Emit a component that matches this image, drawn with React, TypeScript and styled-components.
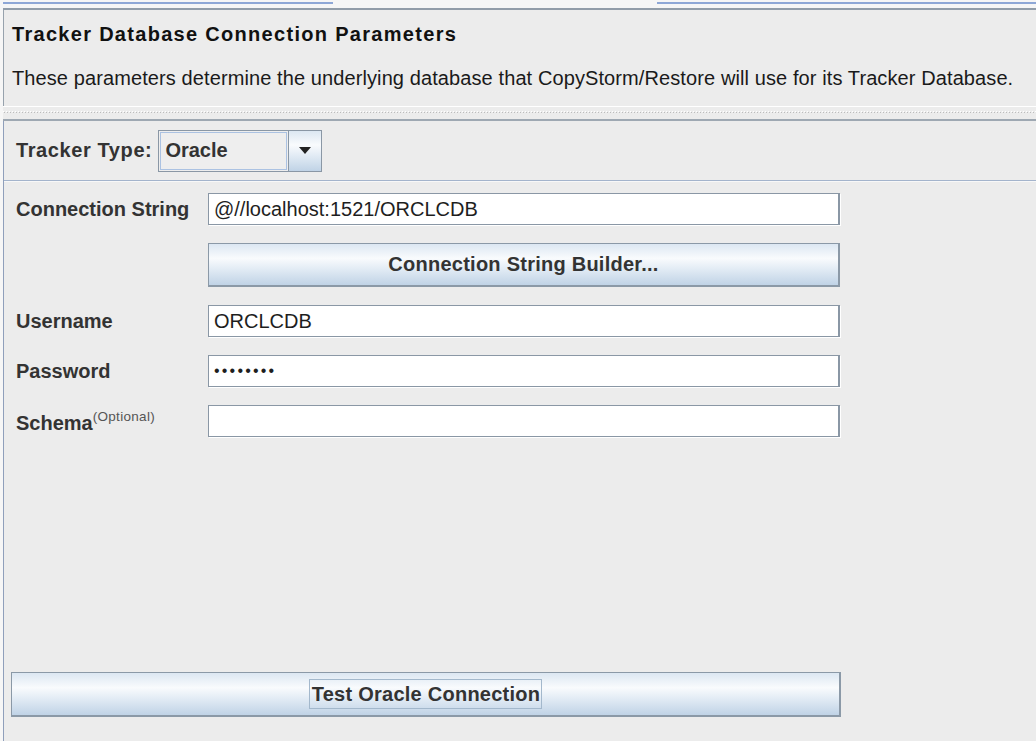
import styled, { createGlobalStyle } from "styled-components";

const GlobalStyle = createGlobalStyle`
  html, body {
    margin: 0;
    padding: 0;
    background: #f6f6f6;
  }
  body {
    font-family: "Liberation Sans", Arial, sans-serif;
    color: #333;
  }
`;

const Window = styled.div`
  width: 1036px;
  height: 741px;
  display: flex;
  flex-direction: column;
  overflow: hidden;
  background: #f6f6f6;
`;

const TabStrip = styled.div`
  height: 8px;
  display: flex;
  align-items: flex-start;
  border-bottom: 2px solid #929da9;
  margin-left: 3px;
`;

const TabEdge = styled.div<{ $width?: number }>`
  margin-top: 2px;
  height: 2px;
  background: #8ea7d6;
  ${({ $width }) => ($width ? `width: ${$width}px;` : "flex: 1;")}
`;

const TabGap = styled.div<{ $width: number }>`
  width: ${({ $width }) => $width}px;
`;

const Body = styled.div`
  flex: 1;
  display: flex;
  flex-direction: column;
  padding-left: 3px;
`;

const TopPanel = styled.section`
  height: 96px;
  box-sizing: border-box;
  background: #ececec;
  border-left: 1px solid #97a2ad;
  padding-left: 8px;
`;

const Title = styled.h1`
  margin: 13px 0 0;
  font-size: 20px;
  line-height: 22px;
  font-weight: bold;
  letter-spacing: 1.3px;
  color: #111;
`;

const Description = styled.p`
  margin: 22px 0 0;
  font-size: 20px;
  line-height: 22px;
  letter-spacing: 0.1px;
  color: #1a1a1a;
`;

const Divider = styled.div`
  height: 15px;
  box-sizing: border-box;
  border-top: 1px solid #ffffff;
  border-bottom: 2px solid #9ea8b2;
  padding-top: 4px;
  background: #ececec;
`;

const DotRow = styled.div`
  height: 2px;
  background:
    repeating-linear-gradient(90deg, #ffffff 0 1px, transparent 1px 3px) top left / 100% 1px no-repeat,
    repeating-linear-gradient(90deg, transparent 0 1px, #bcbcbc 1px 2px, transparent 2px 3px) bottom left / 100% 1px no-repeat;
`;

const LowerPanel = styled.section`
  flex: 1;
  display: flex;
  flex-direction: column;
  background: #ececec;
  border-left: 1px solid #8f9fbb;
`;

const TrackerRow = styled.div`
  height: 60px;
  box-sizing: border-box;
  display: flex;
  align-items: center;
  gap: 6px;
  padding-left: 12px;
  border-bottom: 1px solid #a4b4cc;
  box-shadow: 0 1px 0 #f8f8f8;
`;

const Label = styled.label`
  font-size: 20px;
  font-weight: bold;
  color: #333;
  white-space: nowrap;
`;

const TrackerLabel = styled(Label)`
  letter-spacing: 0.6px;
`;

const Combo = styled.div`
  width: 164px;
  height: 42px;
  box-sizing: border-box;
  display: flex;
  border: 1px solid #8a97a5;
  background: #eeeeee;
`;

const ComboValue = styled.div`
  flex: 1;
  margin: 1px;
  display: flex;
  align-items: center;
  padding-left: 4px;
  border: 1px solid #abc2e2;
  font-size: 20px;
  font-weight: bold;
  color: #333;
`;

const buttonGradient = `linear-gradient(180deg, #dce7f2 0%, #f9fbfd 35%, #e3ecf5 60%, #c0d3e6 100%)`;

const ComboArrow = styled.div`
  width: 32px;
  display: flex;
  align-items: center;
  justify-content: center;
  border-left: 1px solid #8a97a5;
  background: ${buttonGradient};
`;

const Form = styled.div`
  display: grid;
  grid-template-columns: 192px 632px;
  row-gap: 18px;
  padding: 12px 0 0 12px;
  align-items: center;
`;

const Field = styled.div<{ $secret?: boolean }>`
  height: 32px;
  box-sizing: border-box;
  display: flex;
  align-items: center;
  padding-left: 5px;
  background: #ffffff;
  border: 1px solid #8a97a5;
  border-right-width: 2px;
  box-shadow: 1px 1px 0 #ffffff;
  font-size: ${({ $secret }) => ($secret ? "16px" : "20px")};
  color: #1e1e1e;
  letter-spacing: ${({ $secret }) => ($secret ? "2.2px" : "0")};
`;

const WideButton = styled.button<{ $height: number }>`
  height: ${({ $height }) => $height}px;
  box-sizing: border-box;
  display: flex;
  align-items: center;
  justify-content: center;
  padding: 0;
  border: 1px solid #8b99a7;
  border-right-width: 2px;
  border-bottom-width: 2px;
  background: ${buttonGradient};
  font-family: "Liberation Sans", Arial, sans-serif;
  font-size: 20px;
  font-weight: bold;
  letter-spacing: 0.25px;
  color: #333;
`;

const SchemaLabel = styled(Label)`
  padding-top: 4px;
`;

const Optional = styled.sup`
  font-size: 13.5px;
  font-weight: normal;
  color: #555;
  letter-spacing: 0.3px;
  vertical-align: 9px;
  line-height: 0;
`;

const Footer = styled.div`
  margin-top: auto;
  padding: 0 0 24px 7px;
`;

const TestButton = styled(WideButton)`
  width: 830px;
`;

const FocusRing = styled.span`
  border: 1px solid #a3b8cc;
  padding: 3px 1px 3px 2px;
  line-height: 22px;
`;

const ArrowIcon = () => (
  <svg width="12" height="7" viewBox="0 0 12 7">
    <polygon points="0,0 12,0 6,7" fill="#222" />
  </svg>
);

export default function App() {
  return (
    <>
      <GlobalStyle />
      <Window>
        <TabStrip>
          <TabEdge $width={330} />
          <TabGap $width={324} />
          <TabEdge />
        </TabStrip>
        <Body>
          <TopPanel>
            <Title>Tracker Database Connection Parameters</Title>
            <Description>
              These parameters determine the underlying database that CopyStorm/Restore will use for its Tracker
              Database.
            </Description>
          </TopPanel>
          <Divider>
            <DotRow />
          </Divider>
          <LowerPanel>
            <TrackerRow>
              <TrackerLabel>Tracker Type:</TrackerLabel>
              <Combo>
                <ComboValue>Oracle</ComboValue>
                <ComboArrow>
                  <ArrowIcon />
                </ComboArrow>
              </Combo>
            </TrackerRow>
            <Form>
              <Label>Connection String</Label>
              <Field>@//localhost:1521/ORCLCDB</Field>
              <span />
              <WideButton $height={44}>Connection String Builder...</WideButton>
              <Label>Username</Label>
              <Field>ORCLCDB</Field>
              <Label>Password</Label>
              <Field $secret>••••••••</Field>
              <SchemaLabel>
                Schema<Optional>(Optional)</Optional>
              </SchemaLabel>
              <Field />
            </Form>
            <Footer>
              <TestButton $height={45}>
                <FocusRing>Test Oracle Connection</FocusRing>
              </TestButton>
            </Footer>
          </LowerPanel>
        </Body>
      </Window>
    </>
  );
}
